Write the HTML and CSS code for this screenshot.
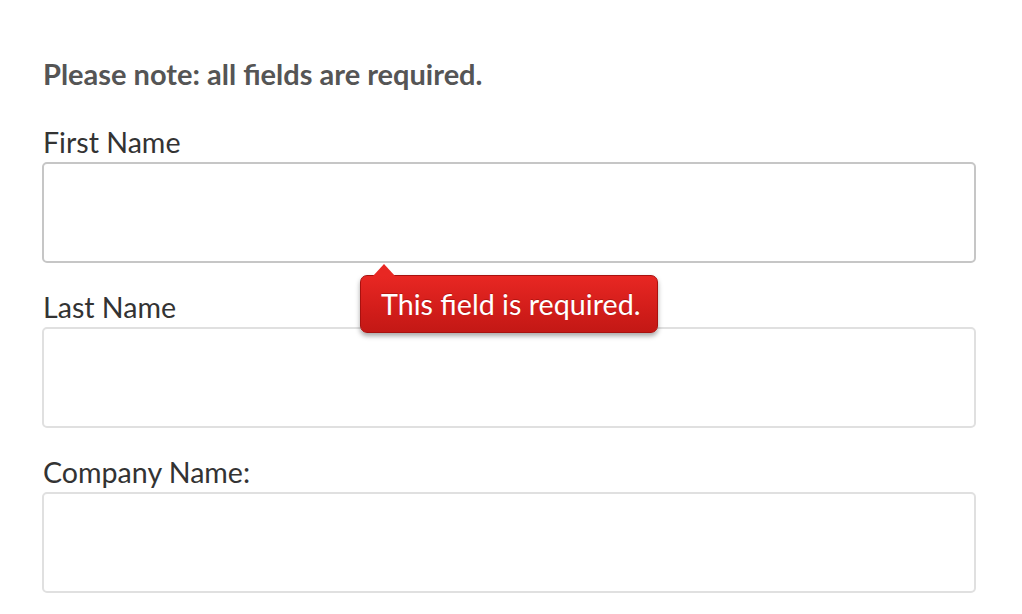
FILE: index.html
```html
<!DOCTYPE html>
<html lang="en">
<head>
<meta charset="utf-8">
<title>Form</title>
<link rel="stylesheet" href="styles.css">
</head>
<body>
<form class="form">
  <p class="note">Please note: all fields are required.</p>
  <div class="field">
    <label class="label" for="fn">First Name</label>
    <div class="control">
      <input class="input input-error" id="fn" type="text">
      <div class="tooltip">This field is required.</div>
    </div>
  </div>
  <div class="field">
    <label class="label" for="ln">Last Name</label>
    <div class="control"><input class="input" id="ln" type="text"></div>
  </div>
  <div class="field">
    <label class="label" for="cn">Company Name:</label>
    <div class="control"><input class="input" id="cn" type="text"></div>
  </div>
</form>
</body>
</html>
```

FILE: styles.css
```css
html, body {
  margin: 0;
  padding: 0;
  background: #fff;
  font-family: Lato, "Open Sans", "Liberation Sans", sans-serif;
  overflow: hidden;
}
.form {
  padding: 56px 46px 0 42px;
  display: flex;
  flex-direction: column;
}
.note {
  margin: 0 0 31px 1px;
  font-size: 29px;
  line-height: 36px;
  font-weight: 700;
  color: #555;
}
.field {
  display: flex;
  flex-direction: column;
  margin-bottom: 25px;
}
.label {
  font-size: 28.6px;
  line-height: 39px;
  color: #333;
  padding-left: 1px;
}
.control {
  position: relative;
}
.input {
  display: block;
  box-sizing: border-box;
  width: 100%;
  height: 101px;
  margin: 0;
  border: 2px solid #e0e0e0;
  border-radius: 5px;
  background: #fff;
  outline: none;
}
.input-error {
  border-color: #c6c6c6;
}
.tooltip {
  position: absolute;
  left: 318px;
  top: 113px;
  box-sizing: border-box;
  height: 58px;
  padding: 0 16px 0 20px;
  display: flex;
  align-items: center;
  font-size: 28.7px;
  color: #fff;
  background: linear-gradient(#e82723, #d21d1a 60%, #c31815);
  border: 1px solid #a8110f;
  border-radius: 7px;
  box-shadow: 0 3px 5px rgba(0, 0, 0, 0.35);
  text-shadow: 0 -1px 0 rgba(120, 0, 0, 0.4);
  z-index: 2;
}
.tooltip::before {
  content: "";
  position: absolute;
  left: 12px;
  top: -12px;
  width: 0;
  height: 0;
  border-left: 11px solid transparent;
  border-right: 11px solid transparent;
  border-bottom: 12px solid #e82723;
}
```
